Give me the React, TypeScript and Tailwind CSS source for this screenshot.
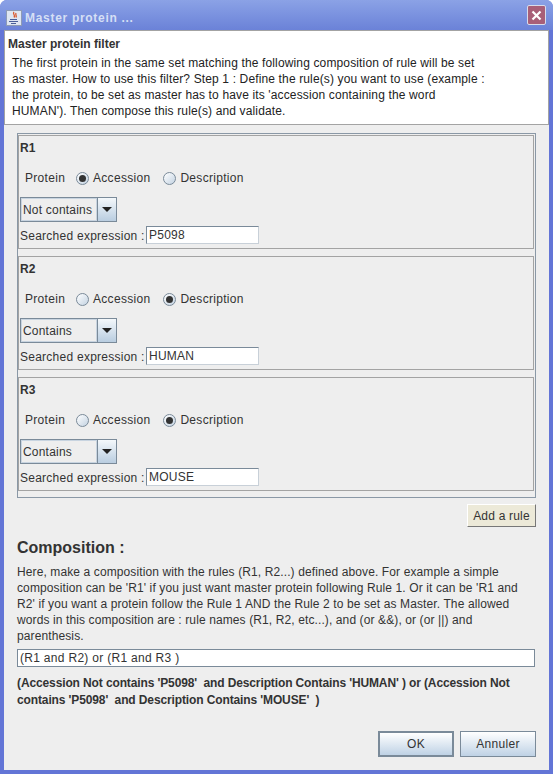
const ff = "font-['Liberation_Sans',Arial,sans-serif]";

function Radio({ checked }: { checked: boolean }) {
  return (
    <span className="w-[13px] h-[13px] rounded-full border border-[#7a8a99] bg-gradient-to-br from-[#ffffff] to-[#c4d3e2] flex items-center justify-center shrink-0">
      {checked && <span className="w-[7px] h-[7px] rounded-full bg-[#333333]" />}
    </span>
  );
}

function Rule({ name, accession, op, value }: { name: string; accession: boolean; op: string; value: string }) {
  return (
    <div className="h-[114px] border border-[#a3a3a3] bg-[#eeeeee] pl-[1px] flex flex-col">
      <div className="text-[12px] font-bold text-[#333333] leading-[14px] h-[14px] mt-[5px]">{name}</div>
      <div className="flex items-center h-[16px] mt-[15px] text-[12px] text-[#333333] tracking-[0.3px]">
        <span className="ml-[5px] w-[43px]">Protein</span>
        <span className="ml-[8px]"><Radio checked={accession} /></span>
        <span className="ml-[4px]">Accession</span>
        <span className="ml-[13px]"><Radio checked={!accession} /></span>
        <span className="ml-[4px]">Description</span>
      </div>
      <div className="flex mt-[11px] h-[25px] w-[97px] border border-[#7a8a99] shrink-0">
        <div className="w-[76px] border border-[#c8d4e0] bg-[#eeeeee] pl-[1px] text-[12px] leading-[23px] text-[#333333] tracking-[0.2px]">{op}</div>
        <div className="flex-1 border-l border-[#7a8a99] bg-gradient-to-b from-[#f4f8fb] to-[#b9cde0] flex items-center justify-center">
          <span className="w-0 h-0 border-l-[5px] border-r-[5px] border-t-[5px] border-l-transparent border-r-transparent border-t-[#222222]" />
        </div>
      </div>
      <div className="flex items-center mt-[4px] h-[18px] text-[12px] text-[#333333] tracking-[0.25px]">
        <span className="w-[126px] shrink-0 pt-[2px]">Searched expression :</span>
        <div className="w-[113px] h-[18px] bg-white border border-[#7a8a99] border-r-[#c8d0d8] border-b-[#c8d0d8] pl-[2px] leading-[16px]">{value}</div>
      </div>
    </div>
  );
}

function Btn({ label, def }: { label: string; def?: boolean }) {
  return (
    <div className={`w-[76px] h-[26px] flex items-center justify-center text-[12px] text-[#333333] tracking-[0.3px] bg-gradient-to-b from-[#ffffff] to-[#bfd2e5] border-[#7a8a99] ${def ? "border-2" : "border"}`}>
      {label}
    </div>
  );
}

export default function App() {
  return (
    <div className={`${ff} w-[553px] h-[774px] bg-[#6375d6] rounded-t-[7px] flex flex-col overflow-hidden`}>
      <div className="h-[30px] shrink-0 bg-gradient-to-b from-[#8ba2e6] to-[#6b82d8] flex items-center pt-[5px] pl-[6px] pr-[7px]">
        <svg width="16" height="16" viewBox="0 0 16 16" className="shrink-0">
          <rect x="0.5" y="0.5" width="15" height="15" fill="#dfe6f2" stroke="#8e9bb5" />
          <path d="M8 2 C6 4 10 5 8 7.5 M10 3 C9 5 11 5 10 7.5" stroke="#d9572b" strokeWidth="1.3" fill="none" />
          <path d="M4 9.5 H11 M3 11.5 H12 M5 13.5 H10" stroke="#4a5f99" strokeWidth="1" />
        </svg>
        <span className="ml-[3px] text-[12px] font-bold text-[#d5dff5] tracking-[0.7px]">Master protein ...</span>
        <div className="ml-auto w-[19px] h-[20px] -mt-[5px] rounded-[2px] bg-[#a85f78] border border-[#d8dcea] flex items-center justify-center">
          <svg width="11" height="11" viewBox="0 0 11 11">
            <path d="M1.5 1.5 L9.5 9.5 M9.5 1.5 L1.5 9.5" stroke="#ffffff" strokeWidth="2.2" />
          </svg>
        </div>
      </div>
      <div className="flex-1 mx-[4px] mb-[4px] bg-[#eeeeee] flex flex-col min-h-0">
        <div className="h-[95px] shrink-0 bg-white border border-[#a3a3a3] pl-[3px] pt-[5px] text-[12px] text-[#222222] leading-[16px]">
          <div className="font-bold text-[#333333]">Master protein filter</div>
          <div className="ml-[4px] mt-[3px] tracking-[0.14px]">
            <div>The first protein in the same set matching the following composition of rule will be set</div>
            <div>as master. How to use this filter? Step 1 : Define the rule(s) you want to use (example :</div>
            <div>the protein, to be set as master has to have its 'accession containing the word</div>
            <div>HUMAN'). Then compose this rule(s) and validate.</div>
          </div>
        </div>
        <div className="mt-[8px] ml-[13px] w-[519px] h-[365px] border border-[#8a98a6] pt-[1px] pr-[1px] pb-[1px] flex flex-col gap-[7px] shrink-0">
          <Rule name="R1" accession op="Not contains" value="P5098" />
          <Rule name="R2" accession={false} op="Contains" value="HUMAN" />
          <Rule name="R3" accession={false} op="Contains" value="MOUSE" />
        </div>
        <div className="flex justify-end mt-[6px] pr-[13px]">
          <div className="w-[69px] h-[23px] bg-[#ece9d8] border border-white border-r-[#777777] border-b-[#777777] flex items-center justify-center text-[12px] text-[#333333] tracking-[0.2px]">Add a rule</div>
        </div>
        <div className="ml-[13px] mt-[11px] text-[16px] font-bold text-[#333333] leading-[20px]">Composition :</div>
        <div className="ml-[13px] mr-[14px] mt-[6px] text-[12px] leading-[16px] text-[#333333] tracking-[0.11px]">
          <div>Here, make a composition with the rules (R1, R2...) defined above. For example a simple</div>
          <div>composition can be 'R1' if you just want master protein following Rule 1. Or it can be 'R1 and</div>
          <div>R2' if you want a protein follow the Rule 1 AND the Rule 2 to be set as Master. The allowed</div>
          <div>words in this composition are : rule names (R1, R2, etc...), and (or &amp;&amp;), or (or ||) and</div>
          <div>parenthesis.</div>
        </div>
        <div className="ml-[13px] mr-[14px] mt-[5px] h-[18px] bg-white border border-[#7a8a99] pl-[2px] text-[12px] leading-[16px] text-[#333333] tracking-[0.3px]">(R1 and R2) or (R1 and R3 )</div>
        <div className="ml-[13px] mt-[8px] text-[12px] font-bold leading-[17px] text-[#333333] tracking-[-0.12px]">
          <div>(Accession Not contains 'P5098'&nbsp; and Description Contains 'HUMAN' ) or (Accession Not</div>
          <div>contains 'P5098'&nbsp; and Description Contains 'MOUSE'&nbsp; )</div>
        </div>
        <div className="mt-auto mb-[13px] flex justify-end gap-[6px] pr-[13px]">
          <Btn label="OK" def />
          <Btn label="Annuler" />
        </div>
      </div>
    </div>
  );
}
